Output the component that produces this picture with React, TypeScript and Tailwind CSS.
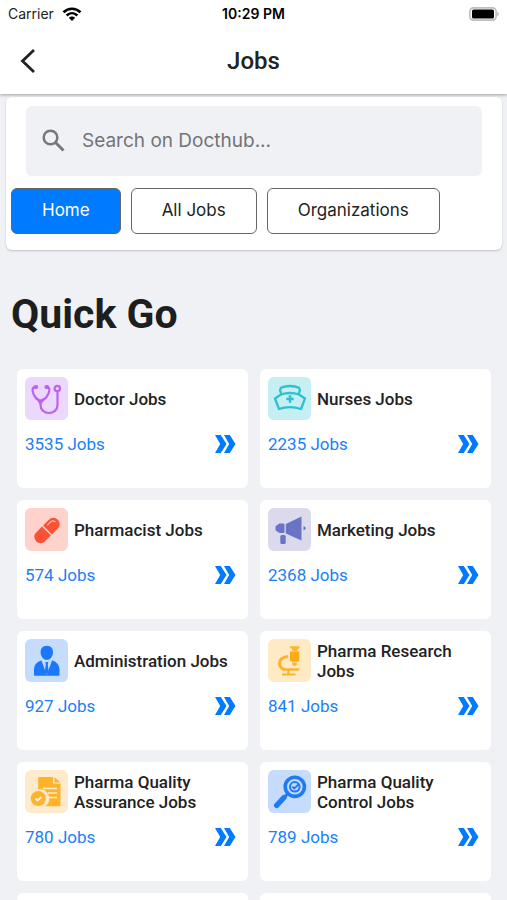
import React, { useState } from 'react'

type Job = {
  title: string
  count: number
  bg: string
  icon: React.ReactNode
}

const tabs = ['Home', 'All Jobs', 'Organizations']

const jobs: Job[] = [
  {
    title: 'Doctor Jobs',
    count: 3535,
    bg: 'bg-[#ecd8fd]',
    icon: (
      <g fill="none" stroke="#bb62f3" strokeWidth="2.200" strokeLinecap="round">
        <path d="M10.500 10C7 10 7 13 8.500 17c2 4 3.500 6.500 7 6.500S21.300 21 23.300 17c1.700-4 1.700-7-1.800-7" />
        <path d="M15.500 23.500V28c0 5 4 8 8.500 8s8.500-3 8.500-8V14.500" />
        <path d="M10.300 10h1M21.300 10h1" strokeWidth="3.800" />
        <path d="m12.500 22 3 4.500 3-4.500" />
        <circle cx="32.300" cy="11.500" r="2.700" />
      </g>
    ),
  },
  {
    title: 'Nurses Jobs',
    count: 2235,
    bg: 'bg-[#c5eff2]',
    icon: (
      <g fill="none" stroke="#30c1d0" strokeWidth="2.300" strokeLinejoin="round">
        <path d="M13.500 17 12 13.500l1-2.800c2.500-1.200 5.500-1.700 9-1.700s6.500.5 9 1.700l1 2.800-1.500 3.500" />
        <path d="M7 21.500 13 17.500c6-2 12-2 18 0l6 4L33 32c-7-2.500-15-2.500-22 0Z" />
        <path d="M22 18.300v7.400M18.300 22h7.400" strokeWidth="2.500" />
      </g>
    ),
  },
  {
    title: 'Pharmacist Jobs',
    count: 574,
    bg: 'bg-[#ffd2cb]',
    icon: (
      <g transform="translate(22 22.500) rotate(-45)">
        <path d="M-.8-6.300H-9a6.300 6.300 0 0 0 0 12.600h8.200Z" fill="#fb5236" />
        <path d="M.8-6.300H9A6.300 6.300 0 0 1 9 6.300H.8Z" fill="#fb5236" />
        <path d="M4.500-3.500h4a3.600 3.600 0 0 1 3.500 3" fill="none" stroke="#ffb5a8" strokeWidth="1.300" strokeLinecap="round" />
      </g>
    ),
  },
  {
    title: 'Marketing Jobs',
    count: 2368,
    bg: 'bg-[#dadaec]',
    icon: (
      <g fill="#6a74c4">
        <path d="M33.500 8.500v24L17.800 25.500V16Z" />
        <path d="M16 16v8.500h-4.500L8 22.300v-4l3.500-2.300Z" stroke="#6a74c4" strokeLinejoin="round" />
        <rect x="12.300" y="27" width="5.400" height="9" rx="1.500" />
        <path d="M35.500 18.300c2.800 0 2.800 4 0 4Z" />
      </g>
    ),
  },
  {
    title: 'Administration Jobs',
    count: 927,
    bg: 'bg-[#c6dcfd]',
    icon: (
      <g fill="#1b78fa">
        <path d="M21.800 6.700c4 0 6.200 2.800 6.200 6.300 0 4-2.500 7.800-6.200 7.800S15.600 17 15.600 13c0-3.500 2.200-6.300 6.200-6.300Z" />
        <path d="M16.500 21.500 21.800 36l5.200-14.500c5 1.500 7 4 7.500 8.500v5.500c0 .8-.5 1.300-1.300 1.300H10.300c-.8 0-1.300-.5-1.300-1.300V30c.5-4.500 2.500-7 7.500-8.500Z" />
        <path d="m18.500 22.500 3.300 13L25 22.500l-3.200 1.500Z" fill="#c6dcfd" />
        <path d="M20.300 23h3l-.5 2.500.9 7-1.900 3-1.900-3 .9-7Z" />
      </g>
    ),
  },
  {
    title: 'Pharma Research Jobs',
    count: 841,
    bg: 'bg-[#ffeac6]',
    icon: (
      <g fill="#fcb42f">
        <path d="M22 7.200h9.500V9l-2 1.300v1.900h-5v-1.900L22 9Z" />
        <path d="M22 12.500h9.300v9l-1.500 1.300h-6.300L22 21.500Z" fill="#ffa914" />
        <path d="M24.300 23.500h4.500v1.800l-1.100 1.400h-2.300l-1.100-1.400Z" />
        <path d="M20 17.500c-5 .5-8.500 3-8.500 7 0 3.300 2.500 5.700 5.500 6" fill="none" stroke="#fcb42f" strokeWidth="3.200" />
        <path d="M16.500 29.200H32l-1.500 2.600h-14Z" />
        <path d="M19.200 31h2.400v3.600h5.900v2H14v-2h5.200Z" />
      </g>
    ),
  },
  {
    title: 'Pharma Quality Assurance Jobs',
    count: 780,
    bg: 'bg-[#ffebcb]',
    icon: (
      <g fill="#fdb42c">
        <path d="M14 7h14v6.500h7.500v22.800H20.500a9.500 9.500 0 0 0-7.300-17V7.800Z" />
        <path d="m29.500 7 6 5.500h-6Z" />
        <path d="M18 18.500h14M23 23h9M23.500 27.500H32" stroke="#ffebcb" strokeWidth="1.400" fill="none" />
        <circle cx="13.300" cy="28.500" r="7.600" />
        <path d="m10.500 28.500 2 2 4-3.500" stroke="#fff3df" strokeWidth="1.800" fill="none" />
      </g>
    ),
  },
  {
    title: 'Pharma Quality Control Jobs',
    count: 789,
    bg: 'bg-[#c6dcfd]',
    icon: (
      <g fill="none" stroke="#2079f5">
        <circle cx="26.800" cy="16.800" r="9.600" strokeWidth="3.600" />
        <circle cx="26.800" cy="16.800" r="4.800" strokeWidth="2" />
        <path d="m24.300 16.500 2 2 4.700-4.500" strokeWidth="1.800" />
        <path d="m19.500 24-3 3" strokeWidth="3" />
        <path d="m16 27.500-7.300 7.800" strokeWidth="5.400" strokeLinecap="round" />
      </g>
    ),
  },
]

const StatusBar = () => (
  <div className="grid h-7 grid-cols-3 items-center px-2 font-['Inter',sans-serif] text-sm text-[#222]">
    <div className="flex items-center gap-2">
      <span>Carrier</span>
      <svg width="20" height="15" viewBox="0 0 20 15" fill="none" stroke="#000" strokeWidth="2.600" aria-hidden="true">
        <path d="M1.500 5.200c5-4.600 12-4.600 17 0" />
        <path d="M4.600 8.500c3.200-3 7.600-3 10.800 0" />
        <path d="M6.800 10.800c1.900-1.700 4.500-1.700 6.400 0L10 14Z" fill="#000" stroke="none" />
      </svg>
    </div>
    <span className="whitespace-nowrap text-center font-semibold text-black">10:29 PM</span>
    <svg className="justify-self-end" width="30" height="14" viewBox="0 0 30 14" aria-hidden="true">
      <rect x=".9" y=".9" width="26.200" height="12.200" rx="3.500" fill="#fff" stroke="#bdbdbd" strokeWidth="1.600" />
      <rect x="3" y="2.500" width="22" height="9" rx="1.500" fill="#000" />
      <path d="M28.300 4.800c2 .8 2 3.600 0 4.400Z" fill="#b5b5b5" />
    </svg>
  </div>
)

const JobCard = ({ job }: { job: Job }) => (
  <a href="#" className="block h-[119px] rounded-md bg-white px-2 pt-2">
    <div className="flex items-center gap-[6px]">
      <span className={`size-[43px] shrink-0 rounded-md ${job.bg}`}>
        <svg viewBox="0 0 43 43" className="size-full" aria-hidden="true">{job.icon}</svg>
      </span>
      <h2 className="text-[17px] font-medium leading-5 text-[#222]">{job.title}</h2>
    </div>
    <div className="mt-3 flex items-center justify-between pr-1">
      <p className="text-[17px] leading-6 text-[#1a80f8]">{job.count} Jobs</p>
      <svg width="21" height="18" viewBox="0 0 21 18" fill="#007aff" aria-hidden="true">
        <path d="M0 0h5.800L11.500 9l-5.700 9H0l5.200-9Z" />
        <path d="M9 0h5.800l5.700 9-5.700 9H9l5.200-9Z" />
      </svg>
    </div>
  </a>
)

const App = () => {
  const [activeTab, setActiveTab] = useState('Home')

  return (
    <div className="flex h-screen flex-col bg-[#f0f1f5] font-['Roboto',sans-serif]">
      <header className="relative z-10 bg-white shadow-[0_1px_3px_rgba(0,0,0,0.35)]">
        <StatusBar />
        <div className="grid h-[66px] grid-cols-[1fr_auto_1fr] items-center px-4">
          <button type="button" aria-label="Back" className="justify-self-start p-1">
            <svg width="16" height="24" viewBox="0 0 16 24" fill="none" stroke="#222" strokeWidth="2.800">
              <path d="M14 1 2.500 12 14 23" />
            </svg>
          </button>
          <h1 className="text-2xl font-medium text-[#222]">Jobs</h1>
        </div>
      </header>

      <main className="min-h-0 flex-1 overflow-y-auto [scrollbar-width:none]">
        <section className="ml-[6px] mr-[5px] mt-[3px] rounded-md bg-white pb-4 pt-[9px] shadow-[0_1px_2px_rgba(0,0,0,0.2)]">
          <label className="mx-5 flex h-[70px] items-center gap-4 rounded-md bg-[#f0f1f5] px-4">
            <svg width="24" height="24" viewBox="0 0 24 24" fill="none" stroke="#77787b" strokeWidth="2.500" aria-hidden="true">
              <circle cx="8.500" cy="8.500" r="6.800" />
              <path d="m13.500 13.500 8 8" strokeWidth="3" />
            </svg>
            <input
              type="text"
              aria-label="Search"
              placeholder="Search on Docthub..."
              className="min-w-0 flex-1 bg-transparent font-['Inter',sans-serif] text-[19px] outline-none placeholder:text-[#737477]"
            />
          </label>
          <div className="mt-3 flex gap-[10px] px-[5px]">
            {tabs.map((tab) => (
              <button
                key={tab}
                type="button"
                onClick={() => setActiveTab(tab)}
                className={`h-[46px] rounded-md border border-[#666] px-[30px] font-['Inter',sans-serif] text-[17px] ${
                  activeTab === tab ? 'bg-[#007aff] text-white' : 'bg-white text-[#222]'
                }`}
              >
                {tab}
              </button>
            ))}
          </div>
        </section>

        <h2 className="mt-9 px-[11px] text-[41px] font-bold leading-[56px] text-[#1d1e20]">Quick Go</h2>

        <div className="mt-[27px] grid grid-cols-2 gap-3 pb-4 pl-[17px] pr-4">
          {jobs.map((job) => (
            <JobCard key={job.title} job={job} />
          ))}
          <div className="h-[119px] rounded-md bg-white" />
          <div className="h-[119px] rounded-md bg-white" />
        </div>
      </main>
    </div>
  )
}

export default App
